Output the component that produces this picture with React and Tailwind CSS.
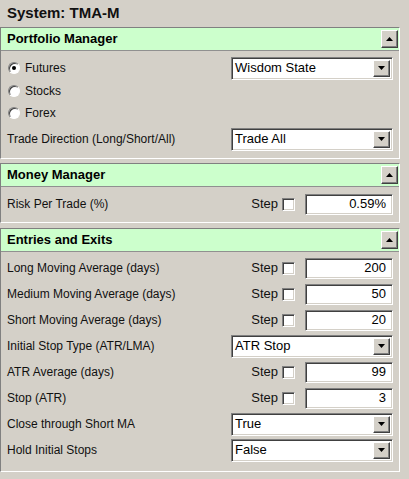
import React from 'react';

const sunken = 'bg-white border border-t-[#808080] border-l-[#808080] border-b-white border-r-white shadow-[inset_1px_1px_0_#404040,inset_-1px_-1px_0_#d4d0c8]';
const raised = 'bg-[#d4d0c8] border border-t-white border-l-white border-b-[#404040] border-r-[#404040] shadow-[inset_-1px_-1px_0_#808080]';

function Arrow({ up }) {
  return (
    <svg width="7" height="4" viewBox="0 0 7 4">
      {up ? <polygon points="0,4 7,4 3.5,0" fill="#000" /> : <polygon points="0,0 7,0 3.5,4" fill="#000" />}
    </svg>
  );
}

function Select({ value }) {
  return (
    <div className={`${sunken} w-[162px] h-[23px] flex items-center justify-between pl-[3px] pr-[2px]`}>
      <span className="text-[13px] text-black">{value}</span>
      <div className={`${raised} w-[17px] h-[17px] flex items-center justify-center`}>
        <Arrow />
      </div>
    </div>
  );
}

function StepInput({ value }) {
  return (
    <div className="flex items-center">
      <span className="text-[13px] text-[#111] mr-[4px]">Step</span>
      <div className={`${sunken} w-[13px] h-[13px] mr-[10px]`} />
      <div className={`${sunken} w-[88px] h-[21px] flex items-center justify-end pr-[6px] text-[13px] text-black`}>
        {value}
      </div>
    </div>
  );
}

function Radio({ checked, label }) {
  return (
    <div className="flex items-center gap-[5px] pl-[7px]">
      <div className="w-[12px] h-[12px] rounded-full bg-white border border-t-[#808080] border-l-[#808080] border-b-white border-r-white shadow-[inset_1px_1px_0_#404040] flex items-center justify-center">
        {checked && <div className="w-[4px] h-[4px] rounded-full bg-black" />}
      </div>
      <span className="text-[12px] text-[#111]">{label}</span>
    </div>
  );
}

function Panel({ title, children, className = '' }) {
  return (
    <div className={`w-[400px] border border-t-[#808080] border-l-[#808080] border-b-white border-r-white ${className}`}>
      <div className="h-[23px] bg-[#ccffcc] border-b border-b-[#909090] flex items-center justify-between pl-[6px] pr-[1px]">
        <span className="text-[13px] font-bold text-black">{title}</span>
        <div className={`${raised} w-[17px] h-[18px] flex items-center justify-center`}>
          <Arrow up />
        </div>
      </div>
      {children}
    </div>
  );
}

function Row({ label, children, h = 'h-[26px]' }) {
  return (
    <div className={`flex items-center justify-between ${h} pl-[6px] pr-[6px]`}>
      <span className="text-[12px] text-[#111]">{label}</span>
      {children}
    </div>
  );
}

export default function App() {
  return (
    <div className="w-[409px] h-[479px] bg-[#d4d0c8] overflow-hidden" style={{ fontFamily: '"Liberation Sans", Arial, sans-serif' }}>
      <div className="h-[27px] pl-[7px] pt-[2px] text-[15px] font-bold text-[#111]">System: TMA-M</div>

      <Panel title="Portfolio Manager" className="mb-[4px]">
        <div className="pt-[5px] pb-[4px]">
          <div className="flex items-center justify-between h-[24px] pr-[6px]">
            <Radio checked label="Futures" />
            <Select value="Wisdom State" />
          </div>
          <div className="flex items-center h-[22px]">
            <Radio label="Stocks" />
          </div>
          <div className="flex items-center h-[22px]">
            <Radio label="Forex" />
          </div>
          <Row label="Trade Direction (Long/Short/All)" h="h-[30px]">
            <Select value="Trade All" />
          </Row>
        </div>
      </Panel>

      <Panel title="Money Manager" className="mb-[5px]">
        <div className="pt-[3px] pb-[4px]">
          <Row label="Risk Per Trade (%)" h="h-[28px]">
            <StepInput value="0.59%" />
          </Row>
        </div>
      </Panel>

      <Panel title="Entries and Exits">
        <div className="pt-[3px] pb-[8px]">
          <Row label="Long Moving Average (days)"><StepInput value="200" /></Row>
          <Row label="Medium Moving Average (days)"><StepInput value="50" /></Row>
          <Row label="Short Moving Average (days)"><StepInput value="20" /></Row>
          <Row label="Initial Stop Type (ATR/LMA)"><Select value="ATR Stop" /></Row>
          <Row label="ATR Average (days)"><StepInput value="99" /></Row>
          <Row label="Stop (ATR)"><StepInput value="3" /></Row>
          <Row label="Close through Short MA"><Select value="True" /></Row>
          <Row label="Hold Initial Stops"><Select value="False" /></Row>
        </div>
      </Panel>
    </div>
  );
}
